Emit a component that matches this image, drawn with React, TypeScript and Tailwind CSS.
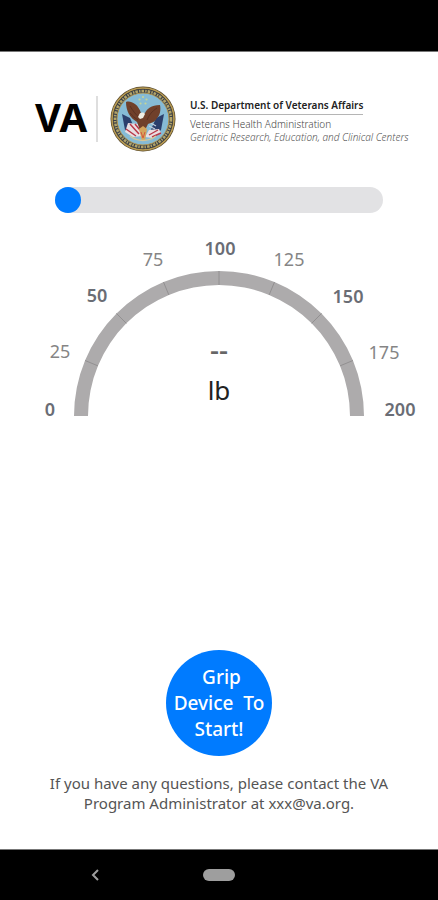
import { useState } from "react";

const CX = 219;
const CY = 186;
const OUTER = 145;
const INNER = 131;

const labels = [
  { value: 0, x: 50, y: 186, major: true },
  { value: 25, x: 60, y: 128, major: false },
  { value: 50, x: 97, y: 72, major: true },
  { value: 75, x: 153, y: 36, major: false },
  { value: 100, x: 220, y: 25, major: true },
  { value: 125, x: 289, y: 36, major: false },
  { value: 150, x: 348, y: 73, major: true },
  { value: 175, x: 384, y: 129, major: false },
  { value: 200, x: 400, y: 186, major: true },
];

const ticks = [1, 2, 3, 4, 5, 6, 7].map((step) => {
  const a = Math.PI - (step * Math.PI) / 8;
  return {
    step,
    x1: CX + INNER * Math.cos(a),
    y1: CY - INNER * Math.sin(a),
    x2: CX + OUTER * Math.cos(a),
    y2: CY - OUTER * Math.sin(a),
  };
});

function Seal() {
  return (
    <svg viewBox="0 0 66 66" className="size-[66px] shrink-0" role="img" aria-label="Department seal">
      <circle cx="33" cy="33" r="32.5" fill="#54462b" />
      <circle cx="33" cy="33" r="31" fill="none" stroke="#b79a53" strokeWidth="1.6" />
      <circle cx="33" cy="33" r="28" fill="none" stroke="#3a4049" strokeWidth="4" />
      <circle cx="33" cy="33" r="28" fill="none" stroke="#b3a468" strokeWidth="2.6" strokeDasharray="2.6 1.2 1.4 1" />
      <circle cx="33" cy="33" r="26" fill="#86bbd5" stroke="#b09553" strokeWidth="1" />
      <g fill="#c6d596">
        <circle cx="33" cy="11" r="1.1" />
        <circle cx="29.5" cy="13.5" r="1.1" />
        <circle cx="36.5" cy="13.5" r="1.1" />
        <circle cx="30.5" cy="17.5" r="1.1" />
        <circle cx="35.5" cy="17.5" r="1.1" />
      </g>
      <path d="M12 28l8 4 6 14-3 4-8-6z" fill="#2b3f6c" />
      <path d="M54 28l-8 4-6 14 3 4 8-6z" fill="#2b3f6c" />
      <path d="M18 37l10 1 4 12-9 1-8-5z" fill="#e9dfe2" />
      <path d="M49 43l-10 1-4 7 8 1 8-5z" fill="#e9dfe2" />
      <path d="M20 38l9 10M16 43l10 7M25 38l5 6" stroke="#b9384a" strokeWidth="1.5" />
      <path d="M48 44l-9 5M51 47l-9 4" stroke="#b9384a" strokeWidth="1.4" />
      <path d="M39 36l7 4M39 40l6 3" stroke="#c3cede" strokeWidth="1.2" />
      <path
        d="M16 16c3-1 6 0 9 2 3 2 5 6 6 9h4c2-4 6-8 15-8 1 5 0 10-3 13-2 4-6 5-9 6l-3 6h-5l-3-8c-7-4-11-11-11-20z"
        fill="#70402a"
      />
      <path d="M20 20c3 5 6 9 10 12M20 27c2 3 5 5 8 7M47 22c-5 3-8 7-10 12" stroke="#5a3122" strokeWidth="1" fill="none" />
      <path d="M29 29c1-3 5-3 6-1l-2 4-3 1-2-2z" fill="#f0eee4" />
      <path d="M29 43l4-3 4 3-2 12h-3z" fill="#d4a45c" />
      <path d="M31 46l2 6 2-6" stroke="#d4593e" strokeWidth="1" fill="none" />
      <path d="M20 50c8 6 18 6 26 0" stroke="#d4c79a" strokeWidth="1.5" fill="none" />
    </svg>
  );
}

function Header() {
  return (
    <header className="flex items-center pl-[35px]">
      <span className="w-[49px] pb-1 text-[40px] leading-none font-bold text-black">VA</span>
      <span className="ml-3 h-[46px] w-0.5 bg-[#dedede]" />
      <div className="ml-3">
        <Seal />
      </div>
      <div className="ml-[14px] flex flex-col items-start pt-1 whitespace-nowrap">
        <p className="border-b border-[#b5b5b5] pb-[3px] text-[10px] leading-3 font-semibold text-[#222]">
          U.S. Department of Veterans Affairs
        </p>
        <p className="mt-[3px] text-[10px] leading-[13px] font-light text-[#444]">Veterans Health Administration</p>
        <p className="text-[10px] leading-[13px] font-light text-[#555] italic">
          Geriatric Research, Education, and Clinical Centers
        </p>
      </div>
    </header>
  );
}

function Gauge() {
  return (
    <svg viewBox="0 0 438 196" className="mt-[17px] w-full" role="img" aria-label="Grip strength in pounds">
      <path
        d={`M${CX - OUTER} ${CY}A${OUTER} ${OUTER} 0 0 1 ${CX + OUTER} ${CY}H${CX + INNER}A${INNER} ${INNER} 0 0 0 ${CX - INNER} ${CY}Z`}
        fill="#adabac"
      />
      {ticks.map((t) => (
        <line key={t.step} x1={t.x1} y1={t.y1} x2={t.x2} y2={t.y2} stroke="#929091" strokeWidth="1" />
      ))}
      {labels.map((l) => (
        <text
          key={l.value}
          x={l.x}
          y={l.y}
          textAnchor="middle"
          className={l.major ? "fill-[#6a6d75] text-[18px] font-semibold" : "fill-[#858585] text-[18px]"}
        >
          {l.value}
        </text>
      ))}
      <text x={CX} y="130" textAnchor="middle" className="fill-[#666] text-[28px] font-medium">
        --
      </text>
      <text x={CX} y="170" textAnchor="middle" className="fill-[#222] text-[26px]">
        lb
      </text>
    </svg>
  );
}

export default function App() {
  const [level, setLevel] = useState(0);

  return (
    <div className="flex min-h-screen flex-col bg-white font-['Noto_Sans',sans-serif]">
      <div className="h-[52px] border-b border-[#777] bg-black" />
      <main className="flex flex-1 flex-col pt-[34px]">
        <Header />
        <div className="mt-[35px] flex px-[55px]">
          <input
            type="range"
            aria-label="Grip level"
            min={0}
            max={200}
            value={level}
            onChange={(e) => setLevel(Number(e.target.value))}
            className="h-[26px] w-full appearance-none rounded-full bg-[#e2e2e4] [&::-webkit-slider-thumb]:size-[26px] [&::-webkit-slider-thumb]:appearance-none [&::-webkit-slider-thumb]:rounded-full [&::-webkit-slider-thumb]:bg-[#007bff]"
          />
        </div>
        <Gauge />
        <div className="mt-auto flex flex-col items-center pb-9">
          <button
            type="button"
            className="size-[106px] rounded-full bg-[#007bff] text-center text-[19px] leading-[26px] font-medium whitespace-pre text-white"
          >
            {" Grip\nDevice  To\nStart!"}
          </button>
          <p className="mt-[17px] px-10 text-center text-[15px] leading-5 text-[#555]">
            If you have any questions, please contact the VA Program Administrator at xxx@va.org.
          </p>
        </div>
      </main>
      <nav className="grid h-[51px] grid-cols-[1fr_32px_1fr] items-center border-t border-[#777] bg-black">
        <button type="button" aria-label="Back" className="ml-[90px] w-3 text-[#9e9e9e]">
          <svg viewBox="0 0 12 14" className="w-3" fill="none" stroke="currentColor" strokeWidth="2">
            <path d="M8 2L3 7l5 5" />
          </svg>
        </button>
        <button type="button" aria-label="Home" className="h-3 w-8 rounded-full bg-[#9e9e9e]" />
      </nav>
    </div>
  );
}
